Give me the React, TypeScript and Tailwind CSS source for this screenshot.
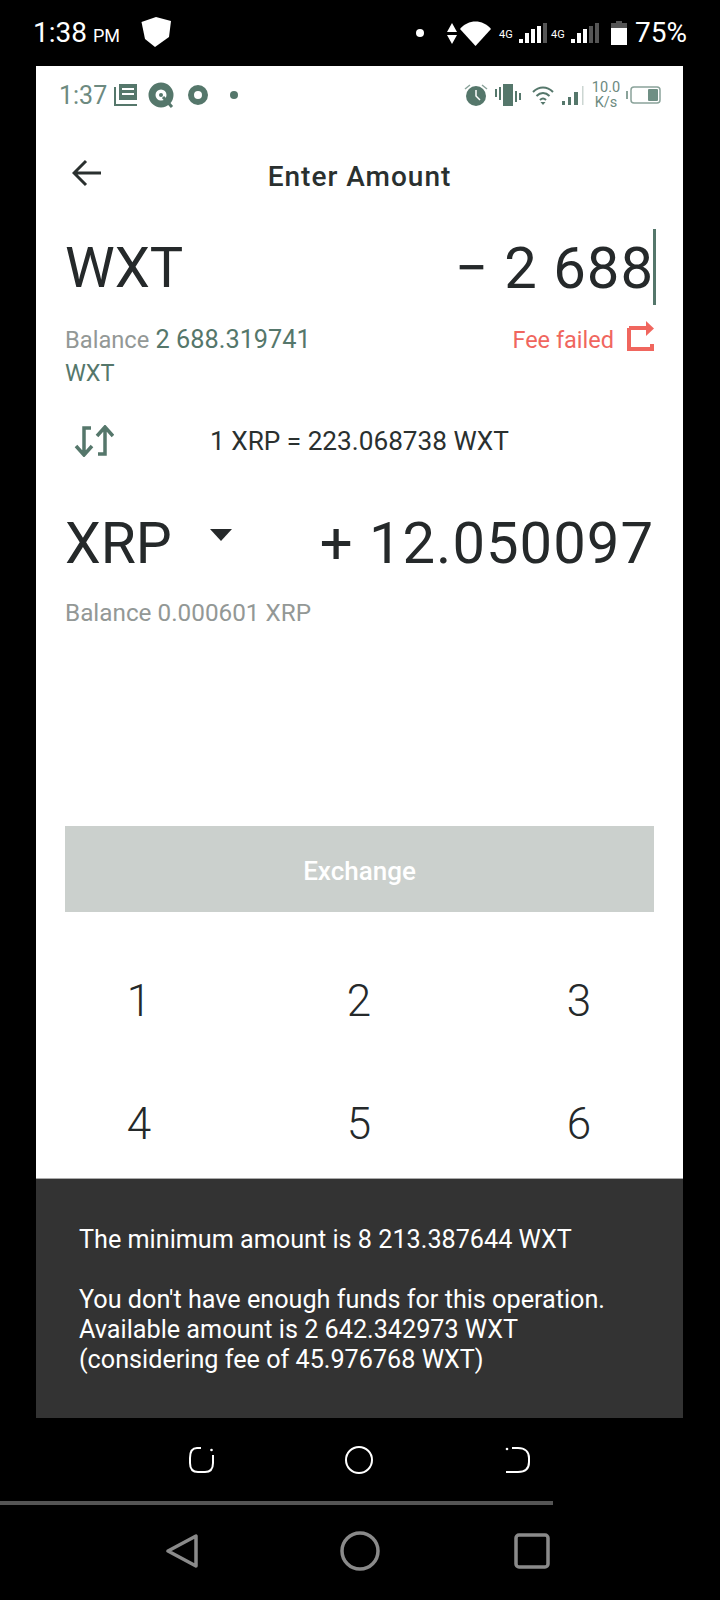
const plex = "font-['Roboto',sans-serif]";

function Bars({ on }: { on: number }) {
  const heights = [4, 10, 14, 17, 20];
  return (
    <svg width="28" height="20" viewBox="0 0 28 20">
      {heights.map((h, i) => (
        <rect key={i} x={i * 6} y={20 - h} width="4" height={h} fill={i < on ? '#fff' : '#555'} />
      ))}
    </svg>
  );
}

function OuterStatus() {
  return (
    <div className="h-[66px] flex items-center font-['Roboto',sans-serif] text-white">
      <div className="ml-[33px] w-[108px] flex items-baseline">
        <span className="text-[28px] leading-none">1:38</span>
        <span className="text-[18px] leading-none ml-[6px]">PM</span>
      </div>
      <svg width="31" height="31" viewBox="0 0 31 31" className="-mt-[2px]">
        <path d="M0.5 5 L15 0 L30 4 L28 20 L14 30 L4 22 Z" fill="#fff" />
      </svg>
      <div className="ml-auto mr-[33px] flex items-center">
        <span className="w-[8px] h-[8px] rounded-full bg-white mr-[23px]" />
        <svg width="10" height="21" viewBox="0 0 10 21" className="mr-[3px]">
          <path d="M5 0 L10 9 L0 9 Z M0 12 L10 12 L5 21 Z" fill="#fff" />
        </svg>
        <svg width="31" height="25" viewBox="0 0 31 25" className="mr-[8px]">
          <path d="M0 8 C8 -2 23 -2 31 8 L15.5 25 Z" fill="#fff" />
        </svg>
        <span className="text-[11px] w-[16px] leading-none mt-[2px]">4G</span>
        <div className="ml-[4px]"><Bars on={4} /></div>
        <span className="text-[11px] w-[16px] leading-none mt-[2px] ml-[4px]">4G</span>
        <div className="ml-[4px]"><Bars on={3} /></div>
        <svg width="16" height="24" viewBox="0 0 16 24" className="ml-[12px]">
          <path d="M5 0 H11 V2 H16 V7 H0 V2 H5 Z" fill="#555" />
          <rect x="0" y="7" width="16" height="17" fill="#fff" />
        </svg>
        <span className="text-[28px] leading-none ml-[8px]">75%</span>
      </div>
    </div>
  );
}

function InnerStatus() {
  const c = '#55776b';
  return (
    <div className="h-[58px] flex items-center font-['Roboto',sans-serif] text-[#6d8a80]">
      <span className="ml-[23px] text-[25px] leading-none mt-[1px]">1:37</span>
      <svg width="25" height="24" viewBox="0 0 25 24" className="ml-[6px]">
        <path d="M2 4 V22 H24" fill="none" stroke={c} strokeWidth="2" />
        <path d="M6 1 H24 V17 H6 Z" fill={c} />
        <path d="M9 6 H21 M9 11 H21" stroke="#fff" strokeWidth="2" />
      </svg>
      <svg width="26" height="26" viewBox="0 0 26 26" className="ml-[10px]">
        <circle cx="13" cy="13" r="9" fill="none" stroke={c} strokeWidth="7" />
        <circle cx="13" cy="13" r="2" fill={c} />
        <path d="M15 15 L24 25" stroke={c} strokeWidth="3" />
      </svg>
      <svg width="20" height="20" viewBox="0 0 20 20" className="ml-[14px]">
        <circle cx="10" cy="10" r="7" fill="none" stroke={c} strokeWidth="6" />
      </svg>
      <span className="ml-[22px] w-[8px] h-[8px] rounded-full bg-[#55776b]" />
      <div className="ml-auto mr-[22px] flex items-center">
        <svg width="24" height="22" viewBox="0 0 24 22">
          <circle cx="12" cy="12" r="10" fill={c} />
          <path d="M12 6 V12 L16 16" stroke="#fff" strokeWidth="1.5" fill="none" />
          <path d="M1 5 L6 1 M23 5 L18 1" stroke="#8aa39a" strokeWidth="1.5" />
        </svg>
        <svg width="26" height="22" viewBox="0 0 26 22" className="ml-[7px]">
          <rect x="8" y="0" width="10" height="22" fill={c} />
          <path d="M1 5 V13 M5 3 V16 M21 7 V18 M25 9 V16" stroke={c} strokeWidth="2" />
        </svg>
        <svg width="22" height="19" viewBox="0 0 22 19" className="ml-[11px]">
          <path d="M1 6 C7 0 15 0 21 6 M4.5 10 C8.5 6 13.5 6 17.5 10 M8 14 C10 12 12 12 14 14" fill="none" stroke={c} strokeWidth="2" />
          <path d="M8.5 16 H13.5 L11 19 Z" fill={c} />
        </svg>
        <svg width="22" height="19" viewBox="0 0 22 19" className="ml-[8px]">
          <rect x="0" y="15" width="3" height="4" fill={c} />
          <rect x="6" y="11" width="3" height="8" fill={c} />
          <rect x="12" y="6" width="4" height="13" fill={c} />
          <rect x="20" y="0" width="1.5" height="19" fill="#ccd6d2" />
        </svg>
        <div className="ml-[8px] w-[28px] flex flex-col items-center text-[14.5px] leading-[15px] -mt-[1px]">
          <span>10.0</span>
          <span>K/s</span>
        </div>
        <svg width="35" height="18" viewBox="0 0 35 18" className="ml-[6px]">
          <rect x="0" y="5" width="2" height="8" fill="#8aa39a" />
          <rect x="5" y="1" width="29" height="16" rx="3" fill="none" stroke="#8aa39a" strokeWidth="1.5" />
          <rect x="22" y="3" width="10" height="12" rx="1" fill="#6f8f84" />
        </svg>
      </div>
    </div>
  );
}

function Keypad() {
  const rows = [['1', '2', '3'], ['4', '5', '6']];
  return (
    <div className="flex-1 min-h-0 overflow-hidden -ml-[7px] pt-[27px]">
      {rows.map((row) => (
        <div key={row[0]} className="grid grid-cols-[220px_220px_220px] h-[123px] items-center">
          {row.map((d) => (
            <span key={d} className="text-center text-[44px] leading-none font-light text-[#25292a]">{d}</span>
          ))}
        </div>
      ))}
    </div>
  );
}

export default function App() {
  return (
    <div className={`w-[720px] h-[1600px] bg-black flex flex-col ${plex}`}>
      <OuterStatus />
      <div className="mx-[36px] w-[647px] h-[1352px] bg-white flex flex-col overflow-hidden">
        <InnerStatus />
        <div className="h-[100px] flex items-center relative">
          <svg width="30" height="28" viewBox="0 0 30 28" className="ml-[36px] -mt-[2px]">
            <path d="M29 14 H3 M14 2 L2 14 L14 26" fill="none" stroke="#2a302f" strokeWidth="3" />
          </svg>
          <span className="absolute left-0 right-0 mt-[6px] text-center text-[28px] font-medium tracking-[1px] text-[#2a302f]">Enter Amount</span>
        </div>
        <div className="h-[86px] flex items-center px-[29px] text-[#25292a]">
          <span className="text-[56px] leading-none font-normal mt-[2px]">WXT</span>
          <span className="ml-auto text-[58px] leading-none font-normal tracking-[1px] mt-[2px]">− 2 688</span>
          <span className="w-[3px] h-[76px] bg-[#55776b] -ml-[1px] -mr-[2px]" />
        </div>
        <div className="flex px-[29px] mt-[15px] h-[78px]">
          <div className="w-[250px] leading-[30px] text-[#55776b]">
            <div>
              <span className="text-[23.7px] text-[#939896]">Balance</span>
              <span className="text-[25.3px]"> 2 688.319741</span>
            </div>
            <div className="text-[23.5px]">WXT</div>
          </div>
          <div className="ml-auto flex items-start">
            <span className="text-[23.5px] leading-[30px] text-[#f0665e]">Fee failed</span>
            <svg width="27" height="32" viewBox="0 0 27 32" className="ml-[13px] -mt-[4px]">
              <path d="M2 7 H20 M2 7 V28 H25 V23" fill="none" stroke="#f0665e" strokeWidth="4" />
              <path d="M19 0 L27 7.5 L19 15 Z" fill="#f0665e" />
            </svg>
          </div>
        </div>
        <div className="h-[76px] flex items-center">
          <svg width="40" height="32" viewBox="0 0 40 32" className="ml-[38px]">
            <path d="M17 3 H10 V29 M2 21 L10 30 L18 21 M24 29 H31 V3 M23 11 L31 2 L39 11" fill="none" stroke="#55776b" strokeWidth="3.5" />
          </svg>
          <span className="ml-[96px] text-[26.2px] leading-none text-[#2a302f]">1 XRP = 223.068738 WXT</span>
        </div>
        <div className="h-[102px] flex items-center px-[29px] text-[#25292a] mt-[13px]">
          <span className="text-[57px] leading-none font-normal">XRP</span>
          <svg width="24" height="12" viewBox="0 0 24 12" className="ml-[37px] -mt-[16px]">
            <path d="M1 0 H23 L12 12 Z" fill="#25292a" />
          </svg>
          <span className="ml-auto text-[58px] leading-none font-normal tracking-[1px]">+ 12.050097</span>
        </div>
        <div className="px-[29px] mt-[4px] text-[24.3px] leading-[30px] text-[#939896]">Balance 0.000601 XRP</div>
        <button className="mx-[29px] mt-[198px] h-[86px] shrink-0 pt-[4px] bg-[#cbd0cd] text-white text-[26px] font-medium">Exchange</button>
        <Keypad />
        <div className="h-[240px] shrink-0 bg-[#333333] border-t border-[#aaa] px-[43px] pt-[46px] text-white font-['Roboto',sans-serif] text-[25.2px] leading-[30px]">
          <p>The minimum amount is 8 213.387644 WXT</p>
          <p className="mt-[30px]">You don't have enough funds for this operation.</p>
          <p>Available amount is 2 642.342973 WXT</p>
          <p>(considering fee of 45.976768 WXT)</p>
        </div>
      </div>
      <div className="h-[83px] flex items-center">
        <svg width="28" height="28" viewBox="0 0 28 28" className="ml-[188px]">
          <path d="M13 2 H9 C4 2 2 6 2 12 V17 C2 23 5 26 10 26 H17 C22 26 25 23 25 17 V9" fill="none" stroke="#fff" strokeWidth="2" />
          <circle cx="23.5" cy="4" r="1.3" fill="#fff" />
        </svg>
        <svg width="28" height="28" viewBox="0 0 28 28" className="ml-[129px]">
          <circle cx="14" cy="14" r="13" fill="none" stroke="#fff" strokeWidth="2" />
        </svg>
        <svg width="26" height="28" viewBox="0 0 26 28" className="ml-[132px]">
          <path d="M7 2 H13 C20 2 24 6 24 12 V16 C24 23 20 26 13 26 H1" fill="none" stroke="#fff" strokeWidth="2" />
          <circle cx="2" cy="3" r="1.3" fill="#fff" />
        </svg>
      </div>
      <div className="w-[553px] h-[4px] bg-[#555555]" />
      <div className="flex-1 flex items-center">
        <svg width="34" height="34" viewBox="0 0 34 34" className="ml-[165px] -mt-[4px]">
          <path d="M31 2 V32 L3 17 Z" fill="none" stroke="#8a8a8a" strokeWidth="3.5" strokeLinejoin="round" />
        </svg>
        <svg width="40" height="40" viewBox="0 0 40 40" className="ml-[141px] -mt-[4px]">
          <circle cx="20" cy="20" r="18" fill="none" stroke="#8a8a8a" strokeWidth="3.5" />
        </svg>
        <svg width="36" height="36" viewBox="0 0 36 36" className="ml-[134px] -mt-[4px]">
          <rect x="2" y="2" width="32" height="32" rx="3" fill="none" stroke="#8a8a8a" strokeWidth="3.5" />
        </svg>
      </div>
    </div>
  );
}
